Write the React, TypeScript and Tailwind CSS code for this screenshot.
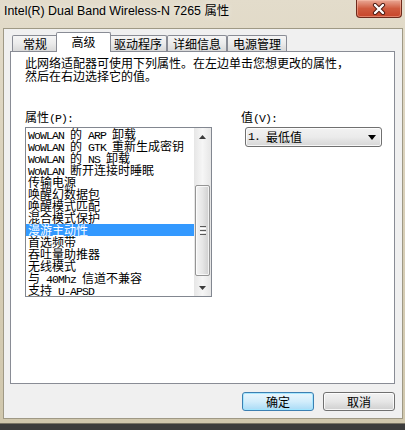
import React from "react";

function T({ s }: { s: string }) {
  const parts = s.split(/([\x20-\x7E]+)/).filter((p) => p.length);
  return (
    <>
      {parts.map((p, i) =>
        /^[\x20-\x7E]+$/.test(p) ? (
          <span key={i} className="font-['Liberation_Mono',monospace] text-[11.5px] tracking-[-0.9px] whitespace-pre">
            {p}
          </span>
        ) : (
          <span key={i}>{p}</span>
        )
      )}
    </>
  );
}

const items = [
  "WoWLAN 的 ARP 卸载",
  "WoWLAN 的 GTK 重新生成密钥",
  "WoWLAN 的 NS 卸载",
  "WoWLAN 断开连接时睡眠",
  "传输电源",
  "唤醒幻数据包",
  "唤醒模式匹配",
  "混合模式保护",
  "漫游主动性",
  "首选频带",
  "吞吐量助推器",
  "无线模式",
  "与 40Mhz 信道不兼容",
  "支持 U-APSD",
];

function Tab({ label, w, selected }: { label: string; w: string; selected?: boolean }) {
  if (selected) {
    return (
      <div
        className={`${w} h-[20px] -mx-[2px] mb-[-1px] relative z-10 border border-b-0 border-[#898c95] rounded-t-[2px] bg-white flex justify-center pt-[1px] text-[12px] leading-[16px] text-black`}
      >
        {label}
      </div>
    );
  }
  return (
    <div
      className={`${w} h-[16px] border border-b-0 border-[#898c95] rounded-t-[2px] bg-linear-to-b from-[#f5f5f5] via-[#ebebeb] to-[#d9d9d9] flex justify-center text-[12px] leading-[16px] text-black`}
    >
      {label}
    </div>
  );
}

export default function App() {
  return (
    <div className="w-[405px] h-[430px] bg-[#3c3c3c] overflow-hidden font-['Noto_Sans_CJK_SC',sans-serif]">
      <div className="w-[405px] h-[424px] flex flex-col bg-linear-to-b from-[#e3dccb] via-[#d8cfb8] to-[#d0c7ad] border-b border-[#7a7566]">
        {/* title bar */}
        <div className="h-[28px] shrink-0 flex items-start">
          <div className="pl-[4px] pt-[4px] text-[12.4px] leading-[14px] text-black font-['Liberation_Sans','Noto_Sans_CJK_SC',sans-serif] [text-shadow:0_0_6px_rgba(255,255,255,0.9)]">
            Intel(R) Dual Band Wireless-N 7265 属性
          </div>
          <div className="ml-auto mr-[3px] w-[46px] h-[18px] rounded-b-[4px] border border-t-0 border-[#6e2a1c] bg-linear-to-b from-[#e9a896] via-[#cf5b3f] to-[#c7452a] shadow-[inset_0_0_0_1px_rgba(255,200,180,0.45)] flex items-center justify-center">
            <svg width="14" height="12" viewBox="0 0 14 12">
              <path d="M3 2 L11 10 M11 2 L3 10" stroke="#4a1810" strokeWidth="4.2" strokeLinecap="round" />
              <path d="M3 2 L11 10 M11 2 L3 10" stroke="#ffffff" strokeWidth="2.4" strokeLinecap="round" />
            </svg>
          </div>
        </div>

        {/* client */}
        <div className="ml-[3px] mr-[2px] mb-[4px] flex-1 border border-[#9f9985] bg-[#f0f0f0] flex flex-col pt-[3px]">
          {/* tabs */}
          <div className="h-[19px] flex items-end ml-[8px]">
            <Tab label="常规" w="w-[46px]" />
            <Tab label="高级" w="w-[55px]" selected />
            <Tab label="驱动程序" w="w-[58px]" />
            <Tab label="详细信息" w="w-[60px]" />
            <Tab label="电源管理" w="w-[60px]" />
          </div>

          {/* panel */}
          <div className="ml-[6px] w-[385px] h-[333px] border border-[#898c95] bg-white">
            <div className="pl-[14px] pt-[4px] text-[12px] leading-[13px] text-black">
              <div>此网络适配器可使用下列属性。在左边单击您想更改的属性，</div>
              <div>然后在右边选择它的值。</div>
            </div>

            <div className="mt-[28px] pl-[14px] flex">
              <div className="w-[187px]">
                <div className="h-[13px] text-[12px] leading-[13px] text-black">
                  <T s="属性(P):" />
                </div>
                <div className="mt-[4px] w-[187px] h-[170px] border border-[#828790] bg-white flex">
                  <div className="flex-1 flex flex-col">
                    {items.map((it, i) => (
                      <div
                        key={i}
                        className={`h-[12px] leading-[12px] text-[12px] pl-[2px] whitespace-nowrap ${
                          i === 8 ? "bg-[#3399ff] text-white" : "text-black"
                        }`}
                      >
                        <T s={it} />
                      </div>
                    ))}
                  </div>
                  {/* scrollbar */}
                  <div className="w-[17px] h-full bg-linear-to-r from-[#e6e6e6] via-[#f6f6f6] to-[#e6e6e6] flex flex-col">
                    <div className="h-[17px] flex items-center justify-center">
                      <svg width="7" height="4" viewBox="0 0 7 4">
                        <path d="M0 4 L3.5 0 L7 4 Z" fill="#3c3c3c" />
                      </svg>
                    </div>
                    <div className="h-[40px]" />
                    <div className="mx-[1px] h-[91px] rounded-[2px] border border-[#959595] bg-linear-to-r from-[#f4f4f4] via-[#e6e6e6] to-[#cfcfcf] shadow-[inset_0_0_0_1px_rgba(255,255,255,0.7)] flex flex-col items-center justify-center gap-[1px]">
                      <div className="w-[6px] h-[1px] bg-[#5a5a5a]" />
                      <div className="w-[6px] h-[1px] bg-[#ffffff]" />
                      <div className="w-[6px] h-[1px] bg-[#5a5a5a]" />
                      <div className="w-[6px] h-[1px] bg-[#ffffff]" />
                      <div className="w-[6px] h-[1px] bg-[#5a5a5a]" />
                    </div>
                    <div className="flex-1" />
                    <div className="h-[17px] flex items-center justify-center">
                      <svg width="7" height="4" viewBox="0 0 7 4">
                        <path d="M0 0 L7 0 L3.5 4 Z" fill="#3c3c3c" />
                      </svg>
                    </div>
                  </div>
                </div>
              </div>

              <div className="ml-[29px]">
                <div className="h-[13px] text-[12px] leading-[13px] text-black">
                  <T s="值(V):" />
                </div>
                <div className="mt-[4px] ml-[4px] w-[137px] h-[20px] rounded-[3px] border border-[#707070] bg-linear-to-b from-[#f2f2f2] via-[#ebebeb] to-[#d6d6d6] shadow-[inset_0_0_0_1px_rgba(255,255,255,0.8)] flex items-center pl-[2px] pr-[5px] text-[12px] leading-[12px] text-black">
                  <T s="1. 最低值" />
                  <svg className="ml-auto" width="8" height="5" viewBox="0 0 8 5">
                    <path d="M0 0 L8 0 L4 5 Z" fill="#000" />
                  </svg>
                </div>
              </div>
            </div>
          </div>

          {/* buttons */}
          <div className="mt-[8px] flex justify-end gap-[9px] pr-[7px]">
            <div className="w-[72px] h-[19px] rounded-[3px] border border-[#3c7fb1] bg-linear-to-b from-[#eaf6fd] via-[#d2edfb] to-[#a9dbf6] shadow-[inset_0_0_0_1px_rgba(160,230,255,0.9)] flex items-center justify-center text-[12px] leading-[12px] text-black">
              确定
            </div>
            <div className="w-[72px] h-[19px] rounded-[3px] border border-[#707070] bg-linear-to-b from-[#f2f2f2] via-[#e6e6e6] to-[#cfcfcf] shadow-[inset_0_0_0_1px_rgba(255,255,255,0.8)] flex items-center justify-center text-[12px] leading-[12px] text-black">
              取消
            </div>
          </div>
        </div>
      </div>
    </div>
  );
}
